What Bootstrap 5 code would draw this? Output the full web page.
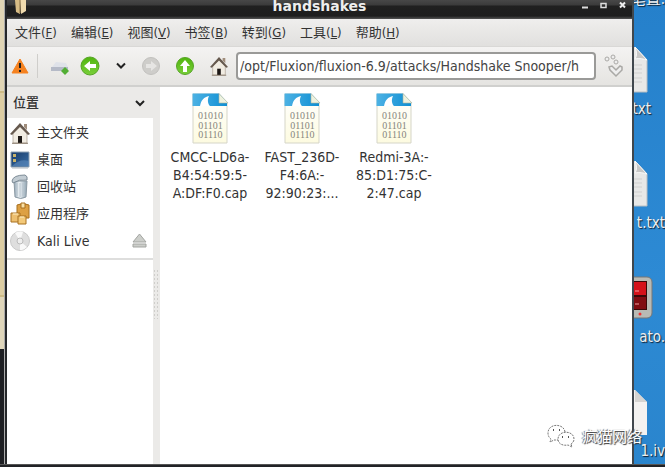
<!DOCTYPE html>
<html lang="zh-CN">
<head>
<meta charset="utf-8">
<meta name="viewport" content="width=device-width, initial-scale=1">
<title>handshakes</title>
<link href="https://cdn.jsdelivr.net/npm/bootstrap@5.3.0/dist/css/bootstrap.min.css" rel="stylesheet">
<style>
body{font-family:"DejaVu Sans Condensed","DejaVu Sans","Noto Sans CJK SC",sans-serif;font-size:14px;line-height:18px;color:#3c3c3c;background:#2b87d1}
.btn{--bs-btn-font-size:14px;--bs-btn-line-height:18px;--bs-btn-color:#333}
.desk{min-height:100vh;background:linear-gradient(#2580cb,#2d8ad4 60%,#2a85cd)}
.backwin{width:8px;background:linear-gradient(#e0d5b5 0 91px,#cdbb86 91px 93px,#dccda3 93px 295px,#cdbb86 295px 297px,#dfd6bb 297px 349px,#1d1e22 349px)}
.win{margin:0 31px 0 4px;min-width:0;border-left:1px solid #aaa;border-right:2px solid #40474d;background:#fff}
.wframe{border-left:2px solid #25272a}
.dock{height:3px;background:#222326;border-top:1px solid #555}
.titlebar{height:19px;background:linear-gradient(#484848,#3b3b3b 5px,#202020 6px,#1e1e1e 16px,#555)}
.titlebar h1{font:bold 14px/12px "DejaVu Sans",sans-serif;color:#eee}
.folder{left:8px;top:0}
.wbtns{right:3px;top:0;gap:7px}
.menus{height:28px;gap:14px;padding-left:8px;background:linear-gradient(#efeeed,#e1e0de);border-bottom:1px solid #d9d8d6}
.menus .btn,.cjk .btn{--bs-btn-font-size:13px}
.tools{height:40px;background:linear-gradient(#f4f3f2,#e5e4e1);border-bottom:2px solid #d0d0ce}
.tools svg,.places svg{display:block;flex:none}
.addr{height:28px;border:2px solid #9a9a98;border-radius:4px;padding:0 2px;color:#444;min-width:0;background:#fff}
.sep{width:1px;height:24px;background:#cfcecb}
.side{width:146px}
.side .sidehead{height:31px;background:#ebeae8;padding:0 7px 0 6px}
.places{border-bottom:2px solid #dededd;padding:1px 0 4px}
.places .btn{height:27px;padding:0 6px 0 3px;gap:7px}
.side .latin{--bs-btn-font-size:14px}
.grip{width:7px;background:#ebeae8}
.grip i{display:block;height:50px;margin-top:182px;background:radial-gradient(circle,#cfcecb 1px,transparent 1px) 0 0/3px 4px}
.files{padding:6px 0 0 4px}
.filebtn{width:92px}
.filebtn .btn-name{display:block}
.under{right:0;top:0;bottom:0;width:40px}
.under svg,.under span{position:absolute}
.under span{color:#eee;font-size:15px;text-shadow:1px 1px 1px #123;white-space:nowrap}
.brand{right:23px;bottom:19px;gap:7px;color:#fff;font:15px/20px "Noto Sans CJK SC",sans-serif;text-shadow:1px 1px 1px #333,-1px 0 1px #777}
</style>
<script src="https://cdn.jsdelivr.net/npm/bootstrap@5.3.0/dist/js/bootstrap.bundle.min.js"></script>
</head>
<body>
<svg width="0" height="0" class="position-absolute" aria-hidden="true">
<defs>
<linearGradient id="gr" x2="0" y2="1"><stop stop-color="#51b50f"/><stop offset="1" stop-color="#79cf3a"/></linearGradient>
<linearGradient id="paper" x2="0" y2="1"><stop stop-color="#fff"/><stop offset="1" stop-color="#fdfbe0"/></linearGradient>
<linearGradient id="blu" x2="1" y2="0"><stop stop-color="#4db2e4"/><stop offset="1" stop-color="#0f8fd3"/></linearGradient>
<linearGradient id="can" x2="1" y2="0"><stop stop-color="#8fa3b3"/><stop offset=".4" stop-color="#f0f5f8"/><stop offset="1" stop-color="#8ea2b0"/></linearGradient>
<linearGradient id="dt" x2="1" y2="1"><stop stop-color="#173a68"/><stop offset="1" stop-color="#3b70a8"/></linearGradient>
<symbol id="home" viewBox="0 0 20 22"><path d="M14 2h3v6l-3-3z" fill="#a08d7c"/><path d="M3 11 10 4l7 7v10H3z" fill="#f1ece2" stroke="#a69b8c" stroke-width=".7"/><path d="M0 12 10 1l10 11-2 1-8-8-8 8z" fill="#66594e"/><path d="M8 14h4v7H8z" fill="#1d1816"/><path d="M2 21.300h16" stroke="#8b7f70"/></symbol>
<symbol id="cap" viewBox="0 0 37 51"><path d="M1 1h26l8 9v40H1z" fill="url(#paper)" stroke="#d5d5c8"/><path d="M.5.500H27l8 9V13H.5z" fill="url(#blu)"/><path d="M8 13C9 7 12 4 17 3c-2 4-1 8 1 10z" fill="#fff"/><path d="M27 .5V10h9z" fill="#eef2df" stroke="#a8b4a0" stroke-width=".6"/><g font-family="Liberation Serif,serif" font-size="10" fill="#85857d" text-anchor="middle"><text x="18.500" y="26">01010</text><text x="18.500" y="35.500">01101</text><text x="18.500" y="45">01110</text></g></symbol>
<symbol id="doc" viewBox="0 0 32 46"><path d="M0 0h19l12 13v32H0z" fill="#e8e8e7" stroke="#b8bec2"/><path d="M19 0c2 5 2 9 0 12 4-1 9 0 12 1z" fill="#c8c8c7" stroke="#fafafa"/><path d="M15 18h11M15 22h11M15 26h11M15 31h11M15 35h11" stroke="#d1d1d0"/></symbol>
</defs></svg>
<div class="desk position-relative d-flex flex-column overflow-hidden">
<div class="backwin position-absolute top-0 bottom-0 start-0"></div>
<div class="under position-absolute" aria-label="桌面">
<span style="right:0;top:-10px">笔置.</span>
<svg width="32" height="46" style="right:17px;top:47px"><use href="#doc"/></svg><span style="right:14px;top:100px">txt</span>
<svg width="32" height="46" style="right:17px;top:161px"><use href="#doc"/></svg><span style="right:0;top:214px">t.txt</span>
<svg width="46" height="44" viewBox="0 0 46 44" style="right:12px;top:276px"><rect x="1" y="1" width="44" height="41" rx="5" fill="#b9bab4" stroke="#777"/><rect x="4" y="5" width="36" height="29" fill="#3a0808"/><path d="M5 6h34v13H5z" fill="#d4121a"/><path d="M5 21h34v12H5z" fill="#800d12"/><path d="M28 15h4M28 28h4" stroke="#f1a0a0"/><circle cx="33" cy="38" r="1.500" fill="#e33"/></svg><span style="right:0;top:328px">ato.</span>
<svg width="32" height="46" viewBox="0 0 32 46" style="right:17px;top:390px"><path d="M0 0h19l12 12v33H0z" fill="#f3f2f1"/><path d="M19 0v12h12z" fill="#d5d4d2"/></svg><span style="right:0;top:442px">1.iv</span>
</div>
<main class="win position-relative flex-grow-1 d-flex flex-column"><div class="wframe flex-grow-1 d-flex flex-column">
<header class="titlebar position-relative text-center">
<svg class="folder position-absolute" width="11" height="14" viewBox="0 0 11 14"><path d="M0 0h5v14l-4-2z" fill="#d8bd86"/><path d="M5 0h6v11l-5 3z" fill="#f0dbae"/><path d="M5 0v13" stroke="#8a7045"/></svg>
<h1 class="mb-0">handshakes</h1>
<div class="wbtns position-absolute d-flex">
<button class="btn p-0 border-0 d-flex" aria-label="最小化"><svg width="12" height="12"><path d="M3 7.500h6" stroke="#ddd" stroke-width="2"/></svg></button>
<button class="btn p-0 border-0 d-flex" aria-label="最大化"><svg width="12" height="12"><path d="M3 3.500h5v4H3z" fill="none" stroke="#ddd" stroke-width="1.500"/></svg></button>
<button class="btn p-0 border-0 d-flex" aria-label="关闭"><svg width="12" height="12"><path d="m3 2.500 5 5m0-5-5 5" stroke="#eee" stroke-width="2"/></svg></button></div>
</header>
<nav class="menus d-flex align-items-center">
<button class="btn p-0 border-0">文件(<u>F</u>)</button><button class="btn p-0 border-0">编辑(<u>E</u>)</button><button class="btn p-0 border-0">视图(<u>V</u>)</button><button class="btn p-0 border-0">书签(<u>B</u>)</button><button class="btn p-0 border-0">转到(<u>G</u>)</button><button class="btn p-0 border-0">工具(<u>L</u>)</button><button class="btn p-0 border-0">帮助(<u>H</u>)</button>
</nav>
<div class="tools d-flex align-items-center px-1">
<svg width="18" height="18" viewBox="0 0 18 18"><path d="M9 2 1 16h16z" fill="#f58220" stroke="#f58220" stroke-linejoin="round"/><path d="M9 6v5M9 13v2" stroke="#222" stroke-width="2"/></svg>
<span class="sep mx-2"></span>
<button class="btn p-0 border-0 ms-1" aria-label="新建"><svg width="22" height="22" viewBox="0 0 22 22"><path d="m6 7 10 1 2 4H2z" fill="#dfe2e9"/><path d="M1 12h17v4H1z" fill="#b5bac7"/><path d="m15 12 4 4-4 4-4-4z" fill="#52ae34"/></svg></button>
<button class="btn p-0 border-0 ms-2 me-3" aria-label="后退"><svg width="20" height="22" viewBox="0 0 20 22"><circle cx="10" cy="11" r="9" fill="url(#gr)" stroke="#56a526"/><path d="m4 11 6-5v3h6v4h-6v3z" fill="#fff"/></svg></button>
<button class="btn p-0 border-0 me-3" aria-label="历史"><svg width="10" height="10" viewBox="0 0 10 10"><path d="m1 2.500 4 4 4-4" fill="none" stroke="#222" stroke-width="2"/></svg></button>
<button class="btn p-0 border-0 me-3" aria-label="前进"><svg width="18" height="22" viewBox="0 0 18 22"><circle cx="9" cy="11" r="8.500" fill="#cecdca" stroke="#c2c1be"/><path d="m15 11-6-5v3H4v4h5v3z" fill="#e6e5e3"/></svg></button>
<button class="btn p-0 border-0 me-3" aria-label="向上"><svg width="18" height="22" viewBox="0 0 18 22"><circle cx="9" cy="11" r="8.500" fill="url(#gr)" stroke="#56a526"/><path d="m9 5 5 6h-3v6H7v-6H4z" fill="#fff"/></svg></button>
<button class="btn p-0 border-0 me-2" aria-label="主页"><svg width="18" height="22"><use href="#home"/></svg></button>
<input class="addr flex-grow-1" type="text" aria-label="路径" value="/opt/Fluxion/fluxion-6.9/attacks/Handshake Snooper/h">
<button class="btn p-0 border-0 ms-2 me-1" aria-label="转到路径"><svg width="20" height="24" viewBox="0 0 20 24" fill="#eee" stroke="#aaa9a6"><circle cx="3" cy="5" r="2"/><circle cx="9" cy="3" r="2"/><circle cx="12" cy="8" r="2"/><path d="m5 13 3-1 4 4 4-4 2 1v3l-6 6-6-6z" stroke-width="1.500"/></svg></button>
</div>
<div class="d-flex flex-grow-1">
<aside class="side cjk flex-shrink-0">
<button class="btn rounded-0 border-0 sidehead w-100 d-flex align-items-center justify-content-between fw-medium">位置<svg width="12" height="12" viewBox="0 0 12 12"><path d="m2 4 4 4 4-4" fill="none" stroke="#222" stroke-width="2"/></svg></button>
<div class="places">
<button class="btn rounded-0 border-0 w-100 d-flex align-items-center"><svg width="20" height="22"><use href="#home"/></svg>主文件夹</button>
<button class="btn rounded-0 border-0 w-100 d-flex align-items-center"><svg width="20" height="20" viewBox="0 0 20 20"><path d="M1 2h18v15H1z" fill="url(#dt)" stroke="#8fa2b3"/><path d="M2 16q8-8 17-5v5z" fill="#5e8abc" opacity=".6"/><path d="M3 4h3v3H3zM3 9h3v3H3z" fill="#c8b46c"/><path d="M2 18h16" stroke="#b2bac0"/></svg>桌面</button>
<button class="btn rounded-0 border-0 w-100 d-flex align-items-center"><svg width="20" height="26" viewBox="0 0 20 26"><path d="m4 7 1 16q6 3 11 0l1-16z" fill="url(#can)" stroke="#8c9aa4"/><path d="M7 9v13M10 9v14M13 9v13" stroke="#b4c1ca"/><path d="M2 7Q3 1 15 1q3 1 2 5-8-1-14 3z" fill="#c2ccd3" stroke="#7c8b96"/></svg>回收站</button>
<button class="btn rounded-0 border-0 w-100 d-flex align-items-center"><svg width="20" height="23" viewBox="0 0 20 23" fill="#dda043" stroke="#a87021"><path d="M7 3q6-3 12 0v13H7z"/><path d="M11 1h4v5h-4z" fill="#f9e1a7"/><path d="M1 11h9v9H1z" fill="#edbf70"/><path d="M8 14h8v8H8z" fill="#f3c979"/><path d="M3 12h5M10 15h4" stroke="#fff0c8"/></svg>应用程序</button>
<button class="btn latin rounded-0 border-0 w-100 d-flex align-items-center"><svg width="20" height="22" viewBox="0 0 20 22"><circle cx="10" cy="11" r="9.500" fill="#dedede" stroke="#c9c9c9"/><path d="M10 11 5 3q5-3 8-1zM10 11l7 6q-4 4-7 3z" fill="#f9f9f9"/><circle cx="10" cy="11" r="3" fill="#eee" stroke="#bbb"/></svg>Kali Live<svg class="ms-auto" width="15" height="15" viewBox="0 0 15 15"><path d="M7.500 1 14 9H1zM1 11h13v3H1z" fill="#ccceca" stroke="#a3a5a1"/></svg></button>
</div></aside>
<div class="grip flex-shrink-0"><i></i></div>
<section class="files d-flex flex-wrap align-content-start">
<button class="btn p-0 border-0 filebtn"><svg class="mb-1" width="37" height="51"><use href="#cap"/></svg><span class="btn-name">CMCC-LD6a-<br>B4:54:59:5-<br>A:DF:F0.cap</span></button>
<button class="btn p-0 border-0 filebtn"><svg class="mb-1" width="37" height="51"><use href="#cap"/></svg><span class="btn-name">FAST_236D-<br>F4:6A:-<br>92:90:23:...</span></button>
<button class="btn p-0 border-0 filebtn"><svg class="mb-1" width="37" height="51"><use href="#cap"/></svg><span class="btn-name">Redmi-3A:-<br>85:D1:75:C-<br>2:47.cap</span></button>
</section>
</div></div></main>
<footer class="dock position-relative"></footer>
<div class="brand position-absolute d-flex align-items-center"><svg width="28" height="24" viewBox="0 0 28 24" fill="#fff" stroke="#555" stroke-width=".8" stroke-dasharray="2 1"><path d="M18 8C17-1 1-1 1 9q0 4 3 6l-1 3 4-2h4"/><path d="M24 20q3-2 3-5c0-9-16-9-16 0 0 5 5 7 10 6l4 2z"/><path d="M6 6h1M12 6h1M15 13h1M21 13h1" stroke-width="2" stroke-dasharray="none"/></svg>疯猫网络</div>
</div>
</body>
</html>
